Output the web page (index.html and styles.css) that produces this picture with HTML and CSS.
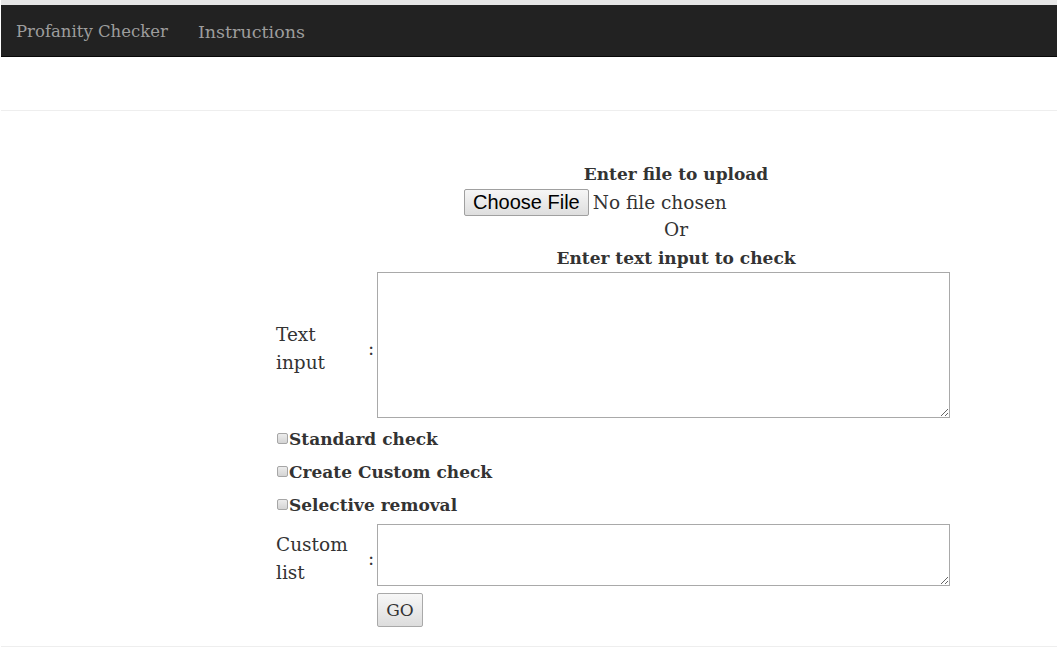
FILE: index.html
```
<!DOCTYPE html>
<html>
<head>
<meta charset="utf-8">
<title>Profanity Checker</title>
<link rel="stylesheet" href="styles.css">
</head>
<body>
<div class="topstrip"></div>
<nav class="navbar">
  <a class="brand" href="#">Profanity Checker</a>
  <a class="navlink" href="#">Instructions</a>
</nav>
<hr class="rule rule-top">
<main class="content">
  <form class="form">
    <div class="heads">
      <div class="head bold">Enter file to upload</div>
      <div class="fileline"><input type="file" class="file"></div>
      <div class="head">Or</div>
      <div class="head bold">Enter text input to check</div>
    </div>
    <div class="row">
      <label class="lbl">Text input</label>
      <span class="colon">:</span>
      <textarea class="ta ta-big"></textarea>
    </div>
    <div class="checks">
      <label class="check"><input type="checkbox" class="cb"><b>Standard check</b></label>
      <label class="check"><input type="checkbox" class="cb"><b>Create Custom check</b></label>
      <label class="check"><input type="checkbox" class="cb"><b>Selective removal</b></label>
    </div>
    <div class="row">
      <label class="lbl">Custom list</label>
      <span class="colon">:</span>
      <textarea class="ta ta-small"></textarea>
    </div>
    <div class="row row-go">
      <span></span><span></span>
      <div><button type="button" class="go">GO</button></div>
    </div>
  </form>
</main>
<hr class="rule rule-bottom">
</body>
</html>
```
FILE: styles.css
```
html, body {
  margin: 0;
  padding: 0;
  background: #fff;
}
body {
  font-family: "DejaVu Serif", Georgia, serif;
  font-size: 18.5px;
  color: #333;
  width: 1056px;
  margin-left: 1px;
}
.topstrip {
  height: 5px;
  background: #e6e6e6;
}
.navbar {
  background: #222;
  border-bottom: 1px solid #080808;
  display: flex;
  align-items: center;
  padding-left: 15px;
  padding-top: 2px;
  box-sizing: border-box;
  height: 52px;
  gap: 30px;
}
.navbar a {
  color: #9d9d9d;
  text-decoration: none;
  font-size: 16.5px;
}
.navbar .navlink {
  font-size: 17.5px;
}
.rule {
  border: 0;
  border-top: 1px solid #eee;
  margin: 0;
}
.rule-top {
  margin-top: 53px;
}
.content {
  padding-top: 49px;
  padding-left: 275px;
}
.form {
  width: 674px;
}
.heads {
  margin-left: 126px;
  width: 548px;
  text-align: center;
  line-height: 28px;
}
.bold {
  font-weight: bold;
  font-size: 17px;
}
.fileline {
  height: 28px;
  display: flex;
  justify-content: center;
  align-items: center;
}
.file {
  font-family: "DejaVu Serif", serif;
  font-size: 18.5px;
  color: #333;
  width: 424px;
  flex: none;
}
.file::file-selector-button {
  font-family: "Liberation Sans", Arial, sans-serif;
  font-size: 20px;
  color: #000;
  height: 27px;
  padding: 0 8px;
  margin-right: 4px;
  border: 1px solid #a0a0a0;
  border-radius: 2px;
  background: linear-gradient(#f6f6f6, #dedede);
}
.row {
  display: grid;
  grid-template-columns: 92px 9px 573px;
  align-items: center;
}
.lbl {
  line-height: 28px;
  max-width: 80px;
  margin-top: 4px;
  margin-bottom: -4px;
}
.colon {
  padding-top: 6px;
}
.ta {
  box-sizing: border-box;
  width: 573px;
  border: 1px solid #a9a9a9;
  resize: vertical;
  margin: 0;
  display: block;
  font-family: "Liberation Mono", monospace;
}
.ta-big {
  height: 146px;
}
.ta-small {
  height: 62px;
}
.checks {
  padding-top: 4px;
  padding-bottom: 3px;
}
.check {
  display: flex;
  align-items: center;
  height: 33px;
  font-size: 17px;
}
.cb {
  appearance: none;
  -webkit-appearance: none;
  box-sizing: border-box;
  margin: 0 1px 0 1px;
  width: 11px;
  height: 11px;
  border: 1px solid #a6a6a6;
  border-radius: 2px;
  background: linear-gradient(#ececec, #d4d4d4);
}
.row-go {
  margin-top: 7px;
}
.go {
  font-family: "DejaVu Serif", serif;
  font-size: 17px;
  color: #333;
  width: 46px;
  height: 34px;
  padding: 0;
  border: 1px solid #a9a9a9;
  border-radius: 2px;
  background: linear-gradient(#f7f7f7, #dddddd);
}
.rule-bottom {
  margin-top: 19px;
}
```
